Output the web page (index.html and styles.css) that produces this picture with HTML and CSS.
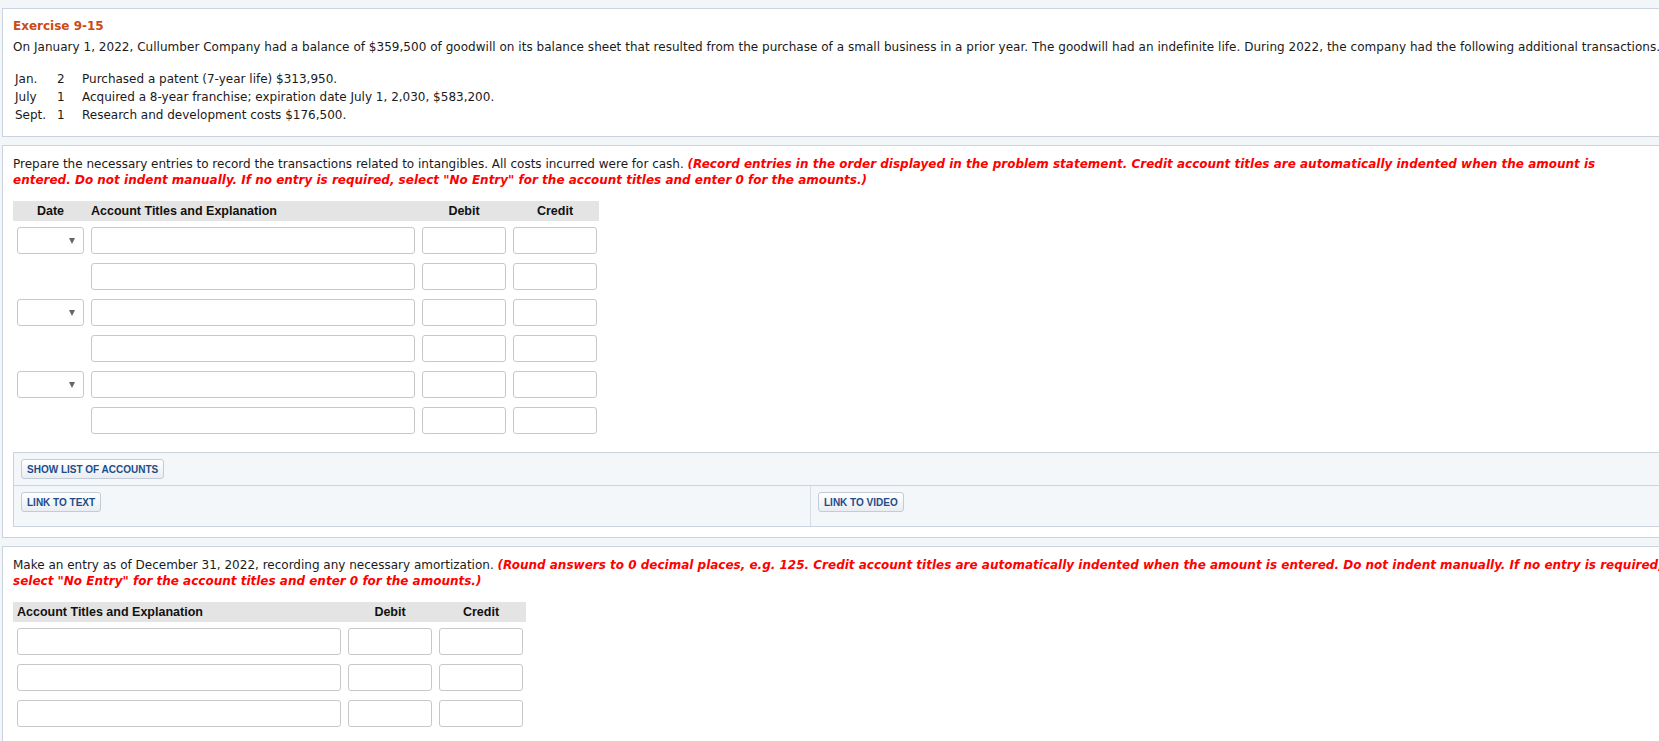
FILE: index.html
```html
<!DOCTYPE html>
<html lang="en">
<head>
    <meta charset="UTF-8">
    <meta name="viewport" content="width=device-width, initial-scale=1.0">
    <title>Exercise 9-15</title>
    <link rel="stylesheet" href="styles.css">
</head>
<body>
    <div class="page">
        <!-- Problem statement -->
        <section class="panel panel-intro">
            <h2 class="exercise-title">Exercise 9-15</h2>
            <p class="lead">On January 1, 2022, Cullumber Company had a balance of $359,500 of goodwill on its balance sheet that resulted from the purchase of a small business in a prior year. The goodwill had an indefinite life. During 2022, the company had the following additional transactions.</p>
            <div class="transactions">
                <span>Jan.</span><span>2</span><span>Purchased a patent (7-year life) $313,950.</span>
                <span>July</span><span>1</span><span>Acquired a 8-year franchise; expiration date July 1, 2,030, $583,200.</span>
                <span>Sept.</span><span>1</span><span>Research and development costs $176,500.</span>
            </div>
        </section>

        <!-- Part 1: journal entries with dates -->
        <section class="panel panel-work">
            <p class="instructions instructions-first">Prepare the necessary entries to record the transactions related to intangibles. All costs incurred were for cash. <em class="note">(Record entries in the order displayed in the problem statement. Credit account titles are automatically indented when the amount is entered. Do not indent manually. If no entry is required, select "No Entry" for the account titles and enter 0 for the amounts.)</em></p>

            <div class="journal journal-dated">
                <div class="journal-head">
                    <span class="head-center">Date</span>
                    <span>Account Titles and Explanation</span>
                    <span class="head-center">Debit</span>
                    <span class="head-center">Credit</span>
                </div>
                <div class="journal-body">
                    <div class="journal-row">
                        <div class="date-pick"><select></select></div>
                        <input type="text"><input type="text"><input type="text">
                    </div>
                    <div class="journal-row">
                        <span></span>
                        <input type="text"><input type="text"><input type="text">
                    </div>
                    <div class="journal-row">
                        <div class="date-pick"><select></select></div>
                        <input type="text"><input type="text"><input type="text">
                    </div>
                    <div class="journal-row">
                        <span></span>
                        <input type="text"><input type="text"><input type="text">
                    </div>
                    <div class="journal-row">
                        <div class="date-pick"><select></select></div>
                        <input type="text"><input type="text"><input type="text">
                    </div>
                    <div class="journal-row">
                        <span></span>
                        <input type="text"><input type="text"><input type="text">
                    </div>
                </div>
            </div>

            <div class="tools">
                <div class="tools-row">
                    <button class="tool-button">SHOW LIST OF ACCOUNTS</button>
                </div>
                <div class="tools-row tools-split">
                    <div class="tools-cell"><button class="tool-button">LINK TO TEXT</button></div>
                    <div class="tools-cell"><button class="tool-button">LINK TO VIDEO</button></div>
                </div>
            </div>
        </section>

        <!-- Part 2: year-end amortization -->
        <section class="panel panel-work panel-last">
            <p class="instructions instructions-second">Make an entry as of December 31, 2022, recording any necessary amortization. <em class="note">(Round answers to 0 decimal places, e.g. 125. Credit account titles are automatically indented when the amount is entered. Do not indent manually. If no entry is required, select "No Entry" for the account titles and enter 0 for the amounts.)</em></p>

            <div class="journal journal-plain">
                <div class="journal-head">
                    <span>Account Titles and Explanation</span>
                    <span class="head-center">Debit</span>
                    <span class="head-center">Credit</span>
                </div>
                <div class="journal-body">
                    <div class="journal-row">
                        <input type="text"><input type="text"><input type="text">
                    </div>
                    <div class="journal-row">
                        <input type="text"><input type="text"><input type="text">
                    </div>
                    <div class="journal-row">
                        <input type="text"><input type="text"><input type="text">
                    </div>
                </div>
            </div>
        </section>
    </div>
</body>
</html>
```

FILE: styles.css
```css
html,
body {
    overflow: hidden;
}

body {
    margin: 0;
    background-color: #f3f6f9;
    font-family: "DejaVu Sans", Verdana, sans-serif;
    font-size: 12px;
    color: #1a1a1a;
}

.page {
    width: 1720px;
    padding: 8px 0 0 2px;
}

.panel {
    background-color: #fff;
    border: 1px solid #cad3de;
    padding: 10px 10px 10px 10px;
    margin-bottom: 8px;
}

.panel-intro {
    padding-bottom: 12px;
}

.panel-last {
    padding-bottom: 40px;
}

.exercise-title {
    margin: 0;
    font-size: 12px;
    line-height: 15px;
    font-weight: bold;
    color: #cc4b14;
}

.lead {
    margin: 5px 0 0;
    line-height: 16px;
    white-space: nowrap;
    letter-spacing: 0.03px;
}

.transactions {
    display: grid;
    grid-template-columns: 42px 25px auto;
    margin-top: 15px;
    padding-left: 2px;
    line-height: 18px;
}

.instructions {
    margin: 0;
    line-height: 16px;
}

/* keep the line breaks where the original page has them */
.instructions-first {
    max-width: 1600px;
}

.instructions-second {
    max-width: 1670px;
}

.note {
    color: #f00;
    font-weight: bold;
    font-style: italic;
}

/* journal tables */
.journal {
    margin-top: 13px;
}

.journal-head,
.journal-row {
    display: grid;
    column-gap: 7px;
    padding-left: 4px;
}

.journal-dated {
    width: 586px;
}

.journal-dated .journal-head,
.journal-dated .journal-row {
    grid-template-columns: 67px 324px 84px 84px;
}

.journal-plain {
    width: 513px;
}

.journal-plain .journal-head,
.journal-plain .journal-row {
    grid-template-columns: 324px 84px 84px;
}

.journal-head {
    height: 20px;
    line-height: 20px;
    background-color: #e4e4e4;
    font-family: "Liberation Sans", Arial, sans-serif;
    font-size: 12.5px;
    font-weight: bold;
    color: #111;
}

.head-center {
    text-align: center;
}

.journal-body {
    display: grid;
    row-gap: 9px;
    margin-top: 6px;
}

.journal-row input,
.date-pick select {
    box-sizing: border-box;
    width: 100%;
    height: 27px;
    margin: 0;
    border: 1px solid #c8c8c8;
    border-radius: 3px;
    background-color: #fff;
    font: inherit;
}

.date-pick {
    position: relative;
}

.date-pick select {
    appearance: none;
    -webkit-appearance: none;
}

.date-pick::after {
    content: "";
    position: absolute;
    right: 9px;
    top: 11px;
    border-left: 3.5px solid transparent;
    border-right: 3.5px solid transparent;
    border-top: 6px solid #666;
    pointer-events: none;
}

/* tool strip under the journal */
.tools {
    margin-top: 18px;
    background-color: #f4f7fa;
    border: 1px solid #cad3de;
    border-right: none;
}

.tools-row {
    padding: 6px 0 6px 7px;
}

.tools-split {
    display: grid;
    grid-template-columns: 797px 1fr;
    padding: 0;
    border-top: 1px solid #cad3de;
}

.tools-cell {
    padding: 6px 0 14px 7px;
}

.tools-cell:first-child {
    border-right: 1px solid #d6dde6;
}

.tool-button {
    height: 20px;
    padding: 0 5px;
    border: 1px solid #c3cbd6;
    border-radius: 3px;
    background: linear-gradient(#ffffff, #e9edf2);
    font-family: "Liberation Sans", Arial, sans-serif;
    font-size: 10px;
    font-weight: bold;
    color: #1d4c8a;
    cursor: pointer;
}
```
